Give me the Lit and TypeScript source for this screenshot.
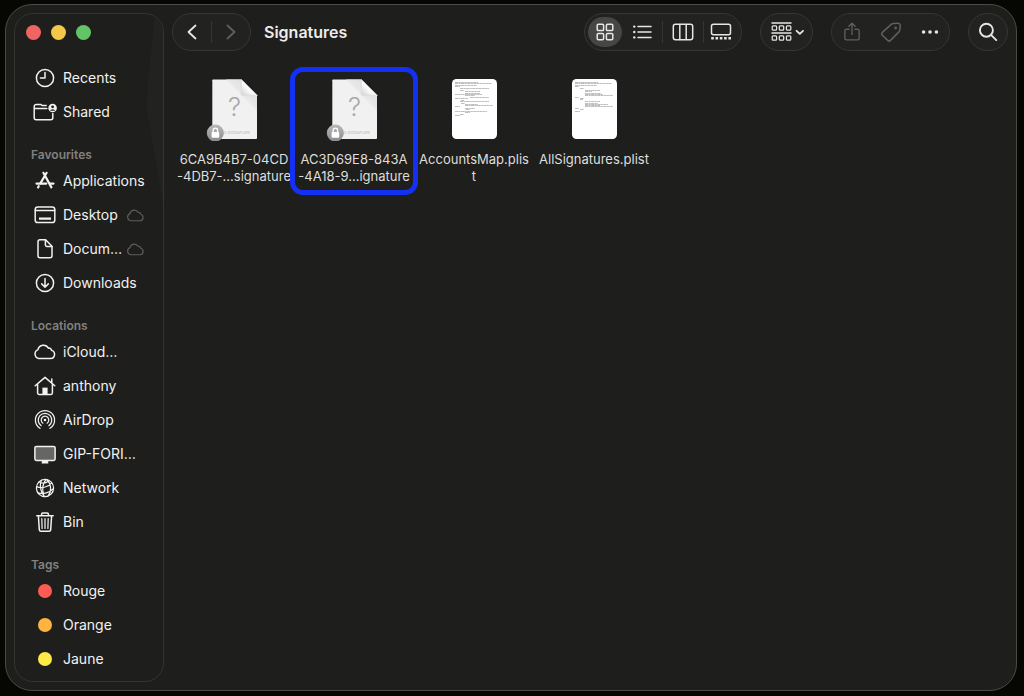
import { LitElement, html, svg, css, nothing, TemplateResult } from "lit";
import { customElement, property, state } from "lit/decorators.js";
import { classMap } from "lit/directives/class-map.js";

const cloudPath =
  "M6 18.6h11.6a4.2 4.2 0 0 0 1-8.2 2.6 2.6 0 0 0-3.2-2.2A5.6 5.6 0 0 0 5 9.6a4.7 4.7 0 0 0 1 9z";

const icons: Record<string, TemplateResult> = {
  recents: svg`<circle cx="12" cy="12" r="8.6"/><path d="M12 6.6V12H7.4"/>`,
  shared: svg`<path d="M13.2 5.6H9.4L7.6 4.4H3.2a2 2 0 0 0-2 2v11.4a2 2 0 0 0 2 2h14.6a2 2 0 0 0 2-2v-4.4M1.4 8.6h12.4"/>
    <circle class="solid" cx="19.6" cy="8" r="4.3"/>
    <circle class="hole" cx="19.6" cy="6.8" r="1.4"/><path class="hole" d="M17 10.8a2.7 2.2 0 0 1 5.2 0 4 4 0 0 1-5.200z"/>`,
  applications: svg`<g class="heavy"><path d="M10.400 3.800l8 14.600M13.600 3.800L7.400 14.400M5.700 17.200l-.6 1.200"/><path d="M3.500 14.600h9.800M17 14.600h3.500"/></g>`,
  desktop: svg`<rect x="2.200" y="4" width="19.600" height="15.600" rx="2.600"/><path d="M2.400 7.400h19.200"/><path class="solid" d="M6 14.400h12v2.400H6z"/>`,
  documents: svg`<path d="M5 4.800a2 2 0 0 1 2-2h5.600L19 9.200v9.600a2 2 0 0 1-2 2H7a2 2 0 0 1-2-2z"/><path d="M12.400 3v5a1.400 1.400 0 0 0 1.400 1.400h5"/>`,
  downloads: svg`<circle cx="12" cy="12" r="8.600"/><path d="M12 7.400v8.600M8.700 12.900l3.300 3.300 3.300-3.300"/>`,
  cloud: svg`<path d=${cloudPath}/>`,
  home: svg`<path d="M2.200 11.800L12 3.400l9.800 8.400M4.600 10v9a1.400 1.400 0 0 0 1.400 1.400h12a1.400 1.400 0 0 0 1.400-1.400v-9M18.800 5v4"/><path class="solid" d="M9.400 13.600h5.200V20H9.400z"/>`,
  airdrop: svg`<circle class="solid" cx="12" cy="12" r="1.300"/>
    <path class="fine" d="M9.900 15.200a3.800 3.800 0 1 1 4.200 0M8.200 17.700a6.800 6.800 0 1 1 7.600 0M7 20.300a9.600 9.600 0 1 1 10 0"/>`,
  monitor: svg`<rect class="screen" x="1.900" y="4.400" width="20.200" height="14" rx="1.400"/><path class="solid" d="M9 18.600h6l.4 3H8.600z"/>`,
  network: svg`<g class="fine"><circle cx="12" cy="12" r="8.600"/><path d="M8.400 4.300C6.200 9 7.400 16 11.400 20.500M13 3.500C9.400 8 9 13 10.500 18.600M14 3.700c4.600 4.600 4.600 12 1.200 16M3.600 10.600c4.400 2 11.600 1 15-3.800M5 16.800c5 1.400 11.800 0 15.400-4.200M6.200 6c3 1.600 7 1.200 9.600-1.200"/></g>`,
  bin: svg`<path d="M3.800 5.800h16.400M8.600 5.600V4.200a1.200 1.200 0 0 1 1.200-1.200h4.400a1.200 1.200 0 0 1 1.200 1.200v1.400M5.400 6l.9 13.600a1.800 1.800 0 0 0 1.800 1.700h7.800a1.800 1.800 0 0 0 1.800-1.700L18.600 6"/><path class="fine" d="M8.800 8.600l.3 9.800M12 8.600v9.800M15.200 8.600l-.3 9.800"/>`,
  back: svg`<path class="mid" d="M15.500 5.500L8.500 12l7 6.500"/>`,
  forward: svg`<path class="mid" d="M8.500 5.500l7 6.500-7 6.500"/>`,
  grid: svg`<rect x="4.200" y="4.200" width="6.400" height="6.400" rx="1.200"/><rect x="13.400" y="4.200" width="6.400" height="6.400" rx="1.200"/><rect x="4.200" y="13.400" width="6.400" height="6.400" rx="1.200"/><rect x="13.400" y="13.400" width="6.400" height="6.400" rx="1.200"/>`,
  list: svg`<path d="M8 6.600h13M8 12h13M8 17.400h13"/><g class="solid"><circle cx="4.300" cy="6.600" r="1.200"/><circle cx="4.300" cy="12" r="1.200"/><circle cx="4.300" cy="17.400" r="1.200"/></g>`,
  columns: svg`<rect x="2.300" y="4.300" width="19.400" height="15.400" rx="2.200"/><path d="M8.800 4.400v15.200M15.200 4.400v15.200"/>`,
  gallery: svg`<rect x="2.500" y="4.300" width="19" height="10.400" rx="2"/><path class="dots" d="M2.200 18.300h20"/>`,
  share: svg`<path d="M8.800 9H6a1.800 1.800 0 0 0-1.800 1.800v8A1.800 1.800 0 0 0 6 20.600h12a1.800 1.800 0 0 0 1.800-1.800v-8A1.800 1.800 0 0 0 18 9h-2.800M12 14.600V2.600M8.600 5.800L12 2.400l3.400 3.400"/>`,
  tag: svg`<path d="M14.400 3.600l4.400-.4a2.400 2.400 0 0 1 2.500 2.600l-.5 4.200a3 3 0 0 1-.9 1.900l-8.400 8.500a2 2 0 0 1-2.800 0l-5.300-5.200a2 2 0 0 1 0-2.800l8.800-8a3.500 3.500 0 0 1 2.200-.8z"/><circle class="solid" cx="16.600" cy="8" r="1.400"/>`,
  more: svg`<g class="solid"><circle cx="5.600" cy="12" r="1.800"/><circle cx="12" cy="12" r="1.800"/><circle cx="18.400" cy="12" r="1.800"/></g>`,
  search: svg`<g class="bold"><circle cx="10.400" cy="10.200" r="6.500"/><path d="M15.300 15.100l5 5"/></g>`,
};

const iconStyles = css`
  svg {
    display: block;
    flex: none;
    fill: none;
    stroke: currentColor;
    stroke-width: 1.5;
    stroke-linecap: round;
    stroke-linejoin: round;
  }
  .fine { stroke-width: 1.25; }
  .mid { stroke-width: 1.8; }
  .bold { stroke-width: 1.9; }
  .heavy { stroke-width: 2.2; }
  .solid { fill: currentColor; stroke: none; }
  .hole { fill: #1e1e1c; stroke: none; }
  .screen { fill: #666664; }
  .dots { stroke-width: 2.6; stroke-linecap: butt; stroke-dasharray: 2.600 1.700; }
`;

@customElement("finder-icon")
export class FinderIcon extends LitElement {
  @property() name = "";
  @property({ type: Number }) size = 24;

  static styles = [iconStyles, css`:host { display: block; flex: none; }`];

  render() {
    return html`<svg width=${this.size} height=${this.size} viewBox="0 0 24 24" aria-hidden="true">${icons[this.name]}</svg>`;
  }
}

interface Place {
  label: string;
  icon?: string;
  color?: string;
  synced?: boolean;
}

const sections: { title?: string; places: Place[] }[] = [
  {
    places: [
      { label: "Recents", icon: "recents" },
      { label: "Shared", icon: "shared" },
    ],
  },
  {
    title: "Favourites",
    places: [
      { label: "Applications", icon: "applications" },
      { label: "Desktop", icon: "desktop", synced: true },
      { label: "Docum…", icon: "documents", synced: true },
      { label: "Downloads", icon: "downloads" },
    ],
  },
  {
    title: "Locations",
    places: [
      { label: "iCloud…", icon: "cloud" },
      { label: "anthony", icon: "home" },
      { label: "AirDrop", icon: "airdrop" },
      { label: "GIP-FORI…", icon: "monitor" },
      { label: "Network", icon: "network" },
      { label: "Bin", icon: "bin" },
    ],
  },
  {
    title: "Tags",
    places: [
      { label: "Rouge", color: "#ff5b52" },
      { label: "Orange", color: "#ffb340" },
      { label: "Jaune", color: "#ffeb47" },
    ],
  },
];

@customElement("finder-sidebar")
export class FinderSidebar extends LitElement {
  static styles = css`
    :host {
      position: relative;
      display: block;
      box-sizing: border-box;
      width: 150px;
      flex: none;
      margin: 8px 0 8px 8px;
      padding: 11px 0 4px;
      border: 1px solid #343432;
      border-radius: 19px;
      overflow: hidden;
    }
    :host::before {
      content: "";
      position: absolute;
      top: 0;
      right: 0;
      width: 24px;
      height: 190px;
      background: #222220;
      clip-path: polygon(65% 0, 100% 0, 100% 100%, 30% 48%);
    }
    .lights {
      position: relative;
      display: flex;
      gap: 10px;
      padding: 0 11px;
      margin-bottom: 21px;
    }
    .light {
      width: 15px;
      height: 15px;
      padding: 0;
      border: 0;
      border-radius: 50%;
    }
    .close { background: #ee6562; }
    .minimise { background: #f5c748; }
    .zoom { background: #61c466; }
    nav { position: relative; }
    h2 {
      margin: 0;
      padding: 17px 16px 0;
      font-size: 12px;
      line-height: 18px;
      font-weight: 600;
      color: #81817f;
    }
    ul { margin: 0; padding: 0; list-style: none; }
    .place {
      display: flex;
      align-items: center;
      gap: 6px;
      height: 34px;
      padding: 0 18px;
      color: #f2f2f1;
      text-decoration: none;
      white-space: nowrap;
    }
    .slot {
      display: grid;
      place-items: center;
      width: 24px;
      height: 24px;
      flex: none;
    }
    .tag { width: 14px; height: 14px; border-radius: 50%; }
    .label { flex: 1; min-width: 0; }
    .synced { color: #5c5c5a; }
  `;

  render() {
    return html`
      <div class="lights">
        <button class="light close" aria-label="Close"></button>
        <button class="light minimise" aria-label="Minimise"></button>
        <button class="light zoom" aria-label="Zoom"></button>
      </div>
      <nav aria-label="Places">
        ${sections.map(
          (s) => html`
            ${s.title ? html`<h2>${s.title}</h2>` : nothing}
            <ul>
              ${s.places.map(
                (p) => html`<li>
                  <a class="place" href="#">
                    <span class="slot">
                      ${p.icon
                        ? html`<finder-icon name=${p.icon}></finder-icon>`
                        : html`<span class="tag" style="background:${p.color}"></span>`}
                    </span>
                    <span class="label">${p.label}</span>
                    ${p.synced ? html`<finder-icon class="synced" name="cloud" size="19"></finder-icon>` : nothing}
                  </a>
                </li>`
              )}
            </ul>
          `
        )}
      </nav>
    `;
  }
}

@customElement("finder-toolbar")
export class FinderToolbar extends LitElement {
  @state() private view = "grid";

  static styles = [
    iconStyles,
    css`
      :host {
        display: flex;
        align-items: center;
        padding: 8px 8px 0;
      }
      h1 {
        flex: 1;
        min-width: 0;
        margin: 0 13px;
        font-size: 16px;
        line-height: 20px;
        font-weight: 600;
        color: #ececeb;
      }
      .actions { display: flex; gap: 18px; }
      .pill {
        display: flex;
        align-items: center;
        box-sizing: border-box;
        height: 38px;
        border: 1px solid #363634;
        border-radius: 19px;
        background: #222220;
      }
      .views { padding: 0 3px; }
      .bar { width: 1px; height: 22px; background: #343432; }
      button {
        display: grid;
        place-items: center;
        width: 38px;
        height: 30px;
        padding: 0;
        border: 0;
        border-radius: 15px;
        background: none;
        color: #e6e6e5;
      }
      button.edge { width: 34px; }
      button.inner { width: 40px; }
      button.share { width: 39px; }
      button.group { width: 51px; }
      button.on { background: #464644; }
      button:disabled { color: #5f5f5d; }
    `,
  ];

  private viewButton(name: string, label: string, size: string) {
    return html`<button
      class=${classMap({ [size]: true, on: this.view === name })}
      aria-label=${label}
      aria-pressed=${this.view === name}
      @click=${() => (this.view = name)}
    ><finder-icon name=${name}></finder-icon></button>`;
  }

  render() {
    const bar = html`<span class="bar"></span>`;
    return html`
      <div class="pill">
        <button aria-label="Back"><finder-icon name="back"></finder-icon></button>
        ${bar}
        <button aria-label="Forward" disabled><finder-icon name="forward"></finder-icon></button>
      </div>
      <h1>Signatures</h1>
      <div class="actions">
        <div class="pill views">
          ${this.viewButton("grid", "Icons", "edge")} ${this.viewButton("list", "List", "inner")}
          ${bar} ${this.viewButton("columns", "Columns", "inner")} ${bar}
          ${this.viewButton("gallery", "Gallery", "edge")}
        </div>
        <div class="pill">
          <button class="group" aria-label="Group by">
            <svg width="34" height="24" viewBox="0 0 34 24">
              <path d="M2 3h19M2 13h19" />
              <g class="fine">
                ${[5.8, 15.8].map((y) =>
                  [2.2, 9.3, 16.4].map((x) => svg`<rect x=${x} y=${y} width="4.400" height="4.400" rx="1"/>`)
                )}
              </g>
              <path class="mid" d="M26.600 10.800l3.200 3 3.200-3" />
            </svg>
          </button>
        </div>
        <div class="pill">
          <button class="share" aria-label="Share" disabled><finder-icon name="share" size="22"></finder-icon></button>
          <button class="share" aria-label="Tags" disabled><finder-icon name="tag"></finder-icon></button>
          <button class="share" aria-label="More"><finder-icon name="more"></finder-icon></button>
        </div>
        <div class="pill"><button aria-label="Search"><finder-icon name="search"></finder-icon></button></div>
      </div>
    `;
  }
}

type Line = [number, number, number];

const accountsLines: Line[] = [
  [13, 5, 23], [13, 6, 37], [13, 8, 22], [13, 9, 5], [18, 11, 29], [18, 13, 4], [23, 14, 15], [23, 16, 15],
  [13, 17, 27], [23, 18, 10], [28, 20, 19], [13, 21, 13], [19, 23, 3], [18, 24, 29], [19, 26, 4],
  [23, 27, 13], [23, 28, 28], [13, 29, 5], [23, 31, 10], [24, 32, 4], [13, 34, 32], [23, 35, 5], [18, 37, 4], [13, 38, 5],
];

const allLines: Line[] = [
  [13, 5, 23], [13, 6, 37], [13, 8, 22], [13, 9, 4], [18, 11, 4], [23, 13, 15], [23, 14, 7], [23, 16, 16],
  [23, 17, 18], [23, 18, 28], [13, 20, 4], [18, 21, 4], [18, 22, 3], [23, 24, 15], [23, 26, 13], [23, 27, 23],
  [23, 28, 15], [23, 29, 28], [13, 31, 4], [18, 32, 4], [13, 34, 5],
];

interface Item {
  name: string[];
  lines?: Line[];
  marked?: boolean;
}

const items: Item[] = [
  { name: ["6CA9B4B7-04CD", "-4DB7-…signature"] },
  { name: ["AC3D69E8-843A", "-4A18-9…ignature"], marked: true },
  { name: ["AccountsMap.plis", "t"], lines: accountsLines },
  { name: ["AllSignatures.plist"], lines: allLines },
];

@customElement("finder-files")
export class FinderFiles extends LitElement {
  static styles = css`
    :host {
      display: grid;
      grid-template-columns: repeat(auto-fill, 120px);
      align-content: start;
      flex: 1;
      padding: 26px 10px;
    }
    .file {
      position: relative;
      display: flex;
      flex-direction: column;
      align-items: center;
      justify-content: start;
      gap: 10px;
      padding: 0;
      border: 0;
      background: none;
      font: inherit;
      font-size: 13px;
      line-height: 17px;
      color: #dededd;
    }
    .marked::after {
      content: "";
      position: absolute;
      inset: -10px -4px;
      border: 5px solid #1430f5;
      border-radius: 13px;
    }
    .name span { display: block; white-space: nowrap; }
    svg { display: block; }
    .mark { font: 300 26px Inter, sans-serif; fill: #a8a8a8; text-anchor: middle; }
    .kind { font: 500 4px Inter, sans-serif; fill: #c4c4c4; text-anchor: end; }
  `;

  private signature() {
    return html`<svg width="64" height="64" viewBox="0 0 64 64" aria-hidden="true">
      <defs>
        <linearGradient id="lock" x1="0" y1="0" x2="0" y2="1">
          <stop offset="0" stop-color="#b9b9bb" /><stop offset="1" stop-color="#8c8c8e" />
        </linearGradient>
        <linearGradient id="fold" x1="0" y1="1" x2="1" y2="0">
          <stop offset="0.100" stop-color="#dcdcdc" /><stop offset="0.450" stop-color="#ffffff" />
        </linearGradient>
        <linearGradient id="shade" x1="0" y1="1" x2="1" y2="0">
          <stop offset="0.300" stop-color="#f1f1f1" /><stop offset="0.800" stop-color="#dedede" />
        </linearGradient>
      </defs>
      <path d="M11 2.500h28.300L55 18.200V61a1 1 0 0 1-1 1H11.300a1 1 0 0 1-1-1V3.200a.7.7 0 0 1 .7-.7z" fill="#f1f1f1" />
      <path d="M24 2.500h15.300L55 18.200V34z" fill="url(#shade)" />
      <path d="M39.300 2.500L55 18.200H40.300a1 1 0 0 1-1-1z" fill="url(#fold)" stroke="#d2d2d2" stroke-width=".5" />
      <text class="mark" x="32.500" y="39">?</text>
      <text class="kind" x="48" y="57">MAILSIGNATURE</text>
      <circle cx="13.300" cy="56" r="8.500" fill="url(#lock)" />
      <rect x="9.600" y="55" width="7.600" height="5.800" rx=".8" fill="#fff" />
      <path d="M11.200 55.200v-1.800a2.200 2.200 0 0 1 4.400 0v1.800" fill="none" stroke="#fff" stroke-width="1.300" />
    </svg>`;
  }

  private plist(lines: Line[]) {
    return html`<svg width="64" height="64" viewBox="0 0 64 64" aria-hidden="true">
      <rect x="10" y="2" width="45" height="60" rx="4.500" fill="#fff" />
      <g stroke="#a4a4a4" stroke-width=".7">
        ${lines.map(([x, y, w]) => svg`<path stroke-dasharray="3.300 .3 2.100 .4" d="M${x} ${y + 0.5}h${w}"/>`)}
      </g>
    </svg>`;
  }

  render() {
    return items.map(
      (f) => html`<button class=${classMap({ file: true, marked: !!f.marked })}>
        ${f.lines ? this.plist(f.lines) : this.signature()}
        <span class="name">${f.name.map((n) => html`<span>${n}</span>`)}</span>
      </button>`
    );
  }
}

@customElement("app-root")
export class AppRoot extends LitElement {
  static styles = css`
    :host {
      display: flex;
      box-sizing: border-box;
      min-height: 100vh;
      padding: 4px 7px 5px 5px;
      background: #060602;
      font-family: Inter, "Liberation Sans", sans-serif;
      font-size: 14px;
      line-height: 18px;
    }
    .window {
      display: flex;
      flex: 1;
      min-width: 0;
      border: 1px solid #4a4a48;
      border-radius: 27px;
      background: #1e1e1c;
      overflow: hidden;
    }
    main {
      display: flex;
      flex-direction: column;
      flex: 1;
      min-width: 0;
    }
  `;

  render() {
    return html`<div class="window">
      <finder-sidebar></finder-sidebar>
      <main>
        <finder-toolbar></finder-toolbar>
        <finder-files></finder-files>
      </main>
    </div>`;
  }
}
